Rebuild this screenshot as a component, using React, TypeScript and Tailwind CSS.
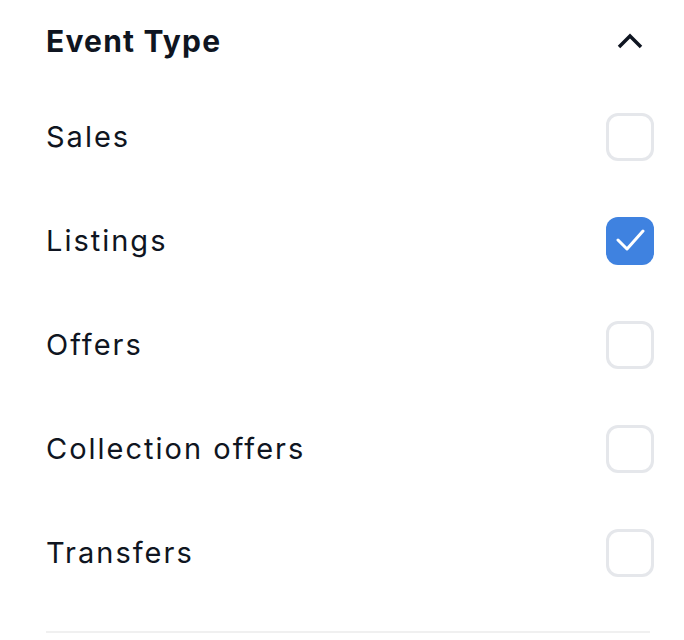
import { useState } from "react";

const EVENT_TYPES = ["Sales", "Listings", "Offers", "Collection offers", "Transfers"];

function Checkbox({ checked, onChange }: { checked: boolean; onChange: () => void }) {
  return (
    <button
      type="button"
      onClick={onChange}
      className={
        checked
          ? "flex h-[48px] w-[48px] items-center justify-center rounded-[12px] bg-[#3f82e0]"
          : "flex h-[48px] w-[48px] items-center justify-center rounded-[12px] border-[3px] border-[#e5e7eb] bg-white"
      }
    >
      {checked && (
        <svg width="30" height="30" viewBox="0 0 30 30" fill="none">
          <path d="M3 14l9 9L28 5" stroke="white" strokeWidth="3" strokeLinecap="round" strokeLinejoin="round" />
        </svg>
      )}
    </button>
  );
}

export default function App() {
  const [selected, setSelected] = useState<string[]>(["Listings"]);

  const toggle = (name: string) =>
    setSelected((prev) => (prev.includes(name) ? prev.filter((n) => n !== name) : [...prev, name]));

  return (
    <div className="min-h-[640px] bg-white pl-[46px] pr-[30px] text-[#0f1521]" style={{ fontFamily: "Inter, 'Noto Sans', sans-serif" }}>
      <div className="flex h-[82px] items-center justify-between">
        <h2 className="text-[30px] font-bold tracking-[1.2px]">Event Type</h2>
        <svg width="26" height="16" viewBox="0 0 26 16" fill="none" className="mr-[11px]">
          <path d="M2 14L13 3l11 11" stroke="#0f1521" strokeWidth="3.5" />
        </svg>
      </div>
      <div className="mt-[3px]">
        {EVENT_TYPES.map((name) => (
          <div key={name} className="flex items-center justify-between py-[28px]">
            <span className="text-[29px] tracking-[2px]">{name}</span>
            <Checkbox checked={selected.includes(name)} onChange={() => toggle(name)} />
          </div>
        ))}
      </div>
      <div className="mt-[26px] mr-[4px] h-[2px] bg-[#f0f0f0]" />
    </div>
  );
}
